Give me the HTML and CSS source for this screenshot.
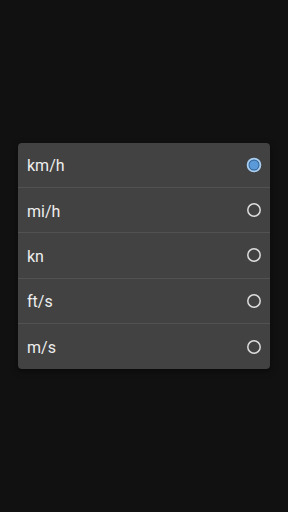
FILE: index.html
```html
<!DOCTYPE html>
<html lang="en">
<head>
  <meta charset="UTF-8">
  <meta name="viewport" content="width=device-width, initial-scale=1.0">
  <title>Speed unit</title>
  <link rel="stylesheet" href="styles.css">
</head>
<body>
  <div class="dialog">
    <div class="option">
      <span class="label">km/h</span>
      <svg class="radio" width="16" height="16" viewBox="0 0 16 16"><circle cx="8" cy="8" r="6.4" fill="#2f5f92" stroke="#a9cff2" stroke-width="1.8"/><circle cx="8" cy="8" r="4.6" fill="#5b9ad8"/></svg>
    </div>
    <div class="option">
      <span class="label">mi/h</span>
      <svg class="radio" width="16" height="16" viewBox="0 0 16 16"><circle cx="8" cy="8" r="6.2" fill="none" stroke="#dcdcdc" stroke-width="1.5"/></svg>
    </div>
    <div class="option">
      <span class="label">kn</span>
      <svg class="radio" width="16" height="16" viewBox="0 0 16 16"><circle cx="8" cy="8" r="6.2" fill="none" stroke="#dcdcdc" stroke-width="1.5"/></svg>
    </div>
    <div class="option">
      <span class="label">ft/s</span>
      <svg class="radio" width="16" height="16" viewBox="0 0 16 16"><circle cx="8" cy="8" r="6.2" fill="none" stroke="#dcdcdc" stroke-width="1.5"/></svg>
    </div>
    <div class="option">
      <span class="label">m/s</span>
      <svg class="radio" width="16" height="16" viewBox="0 0 16 16"><circle cx="8" cy="8" r="6.2" fill="none" stroke="#dcdcdc" stroke-width="1.5"/></svg>
    </div>
  </div>
</body>
</html>
```

FILE: styles.css
```css
html, body {
  height: 100%;
}

body {
  margin: 0;
  background-color: #111111;
  font-family: Roboto, "Liberation Sans", sans-serif;
  display: flex;
  align-items: center;
  justify-content: center;
}

.dialog {
  width: 252px;
  background-color: #424242;
  border-radius: 4px;
  box-shadow: 0 2px 6px rgba(0,0,0,0.5);
}

.option {
  height: 45.4px;
  box-sizing: border-box;
  display: flex;
  align-items: center;
  justify-content: space-between;
  padding: 0 8px 0 9px;
  color: #eeeeee;
  font-size: 16px;
  border-bottom: 1px solid #525252;
}

.option:last-child {
  border-bottom: none;
}

.label {
  padding-top: 2px;
}
```
